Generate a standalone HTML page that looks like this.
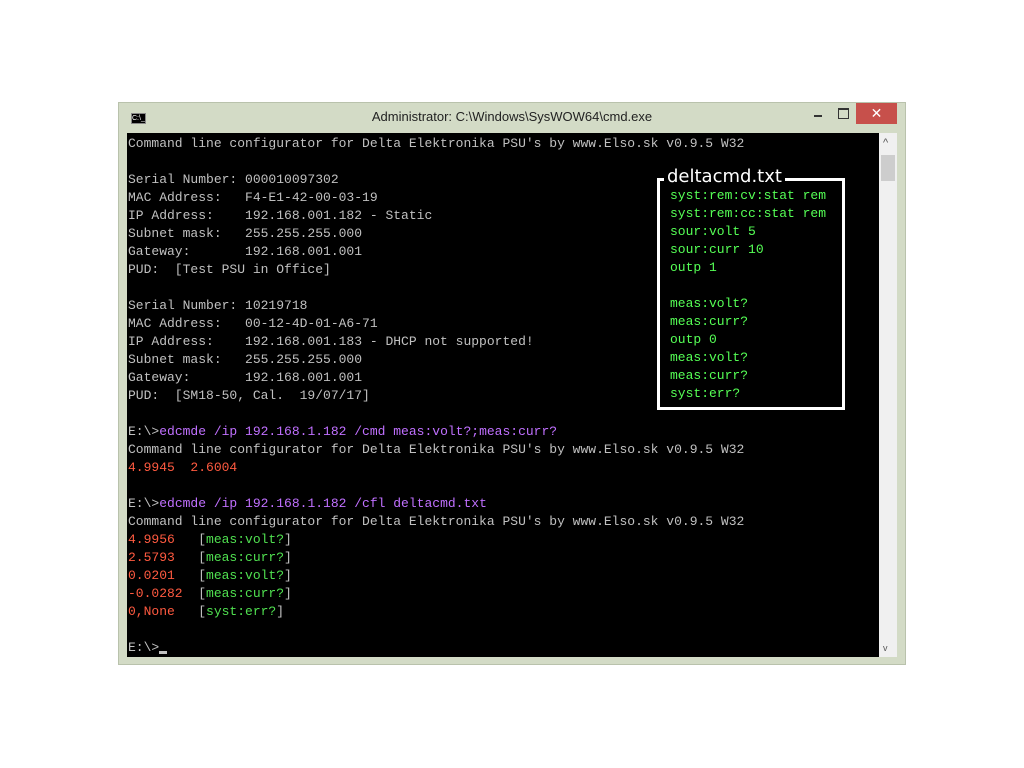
<!DOCTYPE html>
<html><head><style>
body{margin:0;width:1024px;height:768px;background:#fff;position:relative;overflow:hidden}
.win{position:absolute;left:118px;top:102px;width:788px;height:563px;background:#d3dbc6;box-sizing:border-box;border:1px solid #b9c2ac}
.title{position:absolute;left:0;right:0;top:0;height:30px;font:13px "Liberation Sans",sans-serif;color:#222;text-align:center;line-height:28px}
.con{position:absolute;left:127px;top:133px;width:752px;height:524px;background:#000;overflow:hidden}
pre{margin:0;padding:2px 0 0 1px;font:13px/18px "Liberation Mono",monospace;color:#c0c0c0}
.p{color:#c070ff}.r{color:#ff5a40}.g{color:#50e050}
.sb{position:absolute;left:879px;top:133px;width:18px;height:524px;background:#f0f0f0}
.box{position:absolute;left:657px;top:178px;width:182px;height:226px;border:3px solid #fff}
.bt{position:absolute;left:664px;top:166px;background:#000;color:#fff;font:18px "DejaVu Sans","Liberation Sans",sans-serif;padding:0 3px;line-height:22px}
.bx{position:absolute;left:670px;top:187px;font:13px/18px "Liberation Mono",monospace;color:#55ff55;margin:0;padding:0}
</style></head><body>
<div class="win">
<div class="title">Administrator: C:\Windows\SysWOW64\cmd.exe</div>
<div style="position:absolute;left:12px;top:10px;width:15px;height:11px;background:#000;border:1px solid #888;color:#fff;font:7px 'Liberation Sans';line-height:10px;box-sizing:border-box">C:\_</div>
<div style="position:absolute;left:695px;top:12px;width:8px;height:2px;background:#333"></div>
<div style="position:absolute;left:719px;top:5px;width:9px;height:8px;border:1px solid #333;border-top-width:2px"></div>
<div style="position:absolute;left:737px;top:0;width:41px;height:21px;background:#c7504b;color:#fff;font:14px 'Liberation Sans';text-align:center;line-height:21px">✕</div>
</div>
<div class="con"><pre>Command line configurator for Delta Elektronika PSU's by www.Elso.sk v0.9.5 W32

Serial Number: 000010097302
MAC Address:   F4-E1-42-00-03-19
IP Address:    192.168.001.182 - Static
Subnet mask:   255.255.255.000
Gateway:       192.168.001.001
PUD:  [Test PSU in Office]

Serial Number: 10219718
MAC Address:   00-12-4D-01-A6-71
IP Address:    192.168.001.183 - DHCP not supported!
Subnet mask:   255.255.255.000
Gateway:       192.168.001.001
PUD:  [SM18-50, Cal.  19/07/17]

E:\&gt;<span class="p">edcmde /ip 192.168.1.182 /cmd meas:volt?;meas:curr?</span>
Command line configurator for Delta Elektronika PSU's by www.Elso.sk v0.9.5 W32
<span class="r">4.9945  2.6004</span>

E:\&gt;<span class="p">edcmde /ip 192.168.1.182 /cfl deltacmd.txt</span>
Command line configurator for Delta Elektronika PSU's by www.Elso.sk v0.9.5 W32
<span class="r">4.9956 </span>  [<span class="g">meas:volt?</span>]
<span class="r">2.5793 </span>  [<span class="g">meas:curr?</span>]
<span class="r">0.0201 </span>  [<span class="g">meas:volt?</span>]
<span class="r">-0.0282</span>  [<span class="g">meas:curr?</span>]
<span class="r">0,None </span>  [<span class="g">syst:err?</span>]

E:\&gt;<span style="display:inline-block;width:8px;height:3px;background:#c0c0c0;vertical-align:-3px"></span></pre></div>
<div class="sb">
<div style="position:absolute;left:4px;top:4px;font:11px 'Liberation Sans';color:#555">^</div>
<div style="position:absolute;left:2px;top:22px;width:14px;height:26px;background:#cdcdcd"></div>
<div style="position:absolute;left:4px;bottom:4px;font:9px 'Liberation Sans';color:#555">v</div>
</div>
<div class="box"></div>
<div class="bt">deltacmd.txt</div>
<pre class="bx">syst:rem:cv:stat rem
syst:rem:cc:stat rem
sour:volt 5
sour:curr 10
outp 1

meas:volt?
meas:curr?
outp 0
meas:volt?
meas:curr?
syst:err?</pre>
</body></html>
